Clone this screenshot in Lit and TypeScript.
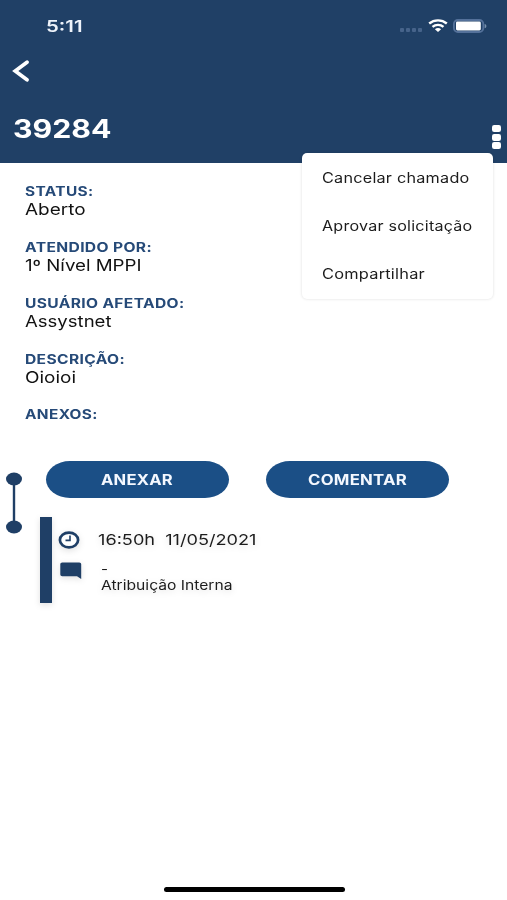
import { LitElement, html, css, svg } from "lit";
import { customElement, property, state, query } from "lit/decorators.js";
import { styleMap } from "lit/directives/style-map.js";

/** A single line of text, widened to fill the given width. */
@customElement("wide-text")
class WideText extends LitElement {
  @property({ type: Number }) width = 100;
  @property() text = "";
  @state() private ratio = 1.2;
  @query("span") private label!: HTMLSpanElement;

  static styles = css`
    :host { display: block; white-space: pre; }
    .label { display: inline-block; vertical-align: top; transform-origin: left center; }
  `;

  updated() {
    const natural = parseFloat(getComputedStyle(this.label).width);
    if (natural > 0) this.ratio = this.width / natural;
  }

  render() {
    return html`<span class="label" style=${styleMap({ transform: `scaleX(${this.ratio})` })}>${this.text}</span>`;
  }
}

interface Field { label: string; labelWidth: number; value?: string; valueWidth?: number; }

const FIELDS: Field[] = [
  { label: "STATUS:", labelWidth: 68.5, value: "Aberto", valueWidth: 60.5 },
  { label: "ATENDIDO POR:", labelWidth: 127, value: "1º Nível MPPI", valueWidth: 116.5 },
  { label: "USUÁRIO AFETADO:", labelWidth: 159.5, value: "Assystnet", valueWidth: 86.5 },
  { label: "DESCRIÇÃO:", labelWidth: 100, value: "Oioioi", valueWidth: 51 },
  { label: "ANEXOS:", labelWidth: 72.7 },
];

const ACTIONS = [
  { text: "Cancelar chamado", width: 147.5 },
  { text: "Aprovar solicitação", width: 150.5 },
  { text: "Compartilhar", width: 103 },
];

const wifi = svg`<svg width="20" height="14" viewBox="0 0 20 14">
  <g fill="none" stroke="#fff" stroke-width="2.4">
    <path d="M1.2 4.5C6.2 .3 13.8 .3 18.8 4.5"/>
    <path d="M4.5 7.9C7.6 5.2 12.4 5.2 15.5 7.9"/>
  </g>
  <path d="M6.9 10.3C8.6 8.7 11.4 8.7 13.1 10.3L10 13.1Z" fill="#fff"/>
</svg>`;

const battery = svg`<svg width="34" height="14" viewBox="0 0 34 14">
  <rect x=".9" y="1" width="29.4" height="12" rx="4" fill="none" stroke="#54719a" stroke-width="1.8"/>
  <rect x="3" y="2.6" width="24.8" height="8.9" rx="1.4" fill="#fff"/>
  <path d="M31.6 4.9C34 5.4 34 8.7 31.6 9.2Z" fill="#7891ad"/>
</svg>`;

const back = svg`<svg width="18" height="22" viewBox="0 0 18 22">
  <path d="M15 2.2L3.2 11L15 19.8" fill="none" stroke="#fff" stroke-width="3.7" stroke-linecap="round" stroke-linejoin="miter"/>
</svg>`;

const clock = svg`<svg width="22" height="18" viewBox="0 0 22 18">
  <ellipse cx="11" cy="9" rx="9.1" ry="7.4" fill="#fff" stroke="#1f3f66" stroke-width="2.7"/>
  <path d="M12 4.5V9.4H7.5" fill="none" stroke="#1f3f66" stroke-width="1.6"/>
</svg>`;

const comment = svg`<svg width="22" height="18" viewBox="0 0 22 18">
  <path d="M2.2 .4H19.3Q21.2 .4 21.2 2V17L17 14.2H2.2Q.3 14.2 .3 12.6V2Q.3 .4 2.2 .4Z" fill="#1f3f66"/>
</svg>`;

const timeline = svg`<svg width="18" height="62" viewBox="0 0 18 62">
  <path d="M9 7V55" stroke="#1f3f66" stroke-width="2.4"/>
  <ellipse cx="9" cy="7" rx="8" ry="6.5" fill="#1f3f66"/>
  <ellipse cx="9" cy="55" rx="8" ry="6.5" fill="#1f3f66"/>
</svg>`;

@customElement("app-root")
class AppRoot extends LitElement {
  static styles = css`
    :host {
      display: flex; flex-direction: column; position: relative;
      width: 507px; height: 900px; overflow: hidden; box-sizing: border-box;
      background: #fff; color: #111; font-family: Inter, "Liberation Sans", sans-serif;
    }
    * { box-sizing: border-box; }
    svg { display: block; flex: none; }
    .header { height: 163.4px; flex: none; background: #204066; color: #fff; }
    .status { display: flex; align-items: center; height: 52px; padding: 0 20.3px 0 46px; }
    .time { font-size: 16px; line-height: 20px; font-weight: 600; margin-right: auto; color: #eef3fa; }
    .signal { display: flex; gap: 2.2px; margin: 8px 5.5px 0 0; }
    .signal i { width: 4px; height: 4px; border-radius: 1px; background: #46638a; }
    .wifi { margin-right: 5px; }
    .back { display: flex; height: 38px; align-items: center; padding-left: 12px; }
    .title { display: flex; height: 77px; align-items: center; padding: 0 6.5px 0 13px; justify-content: space-between; }
    .number { font-size: 25px; line-height: 30px; font-weight: 700; }
    .more { display: flex; flex-direction: column; gap: 1.8px; padding-top: 17px; }
    .more i { width: 9px; height: 7px; border-radius: 2.2px; background: #fff; }
    .menu {
      position: absolute; z-index: 2; top: 153px; left: 302px; width: 191px; height: 145.5px;
      padding: 1px 0 0 19.5px; background: #fff; border-radius: 5px;
      box-shadow: 0 0 3px rgba(0, 0, 0, .14); color: #1c1c1c; font-size: 14px;
    }
    .menu wide-text { line-height: 48px; letter-spacing: .2px; }
    .fields { padding: 19px 0 0 25.4px; height: 297.6px; flex: none; }
    .field { height: 55.75px; }
    .name { font-size: 13px; line-height: 18px; font-weight: 700; letter-spacing: .3px; color: #264a78; }
    .value { font-size: 16px; line-height: 18.5px; }
    .progress { display: flex; flex: none; padding-left: 5.3px; }
    .line { padding-top: 11px; width: 34.7px; flex: none; }
    .column { display: flex; flex-direction: column; gap: 19.5px; }
    .buttons { display: flex; gap: 36.5px; padding-left: 5.7px; }
    .button {
      width: 183.5px; height: 37px; border-radius: 24px / 18.5px; background: #1b4f86; color: #f4f8ff;
      display: flex; justify-content: center; font-size: 14px; line-height: 37px; font-weight: 700; letter-spacing: .2px;
    }
    .anexar wide-text { width: 72px; }
    .comentar wide-text { width: 99px; }
    .entry {
      border-left: 12.5px solid #1f3f66; height: 85.5px; padding: 14px 0 0 5.5px; width: 230px;
      display: flex; flex-direction: column; filter: drop-shadow(0 2px 3px rgba(0, 0, 0, .12)); color: #1c1c1c;
    }
    .row { display: flex; }
    .when { height: 30.5px; gap: 18px; }
    .when svg { margin-left: .5px; }
    .date { font-size: 15px; line-height: 17px; }
    .what { gap: 19.5px; padding-left: 2.5px; }
    .note { font-size: 13px; line-height: 16px; margin-top: -1px; }
    .home { margin: auto auto 8px 163.5px; width: 181px; height: 5px; flex: none; border-radius: 3px; background: #000; }
  `;

  render() {
    return html`
      <header class="header">
        <div class="status">
          <wide-text class="time" .text=${"5:11"} .width=${36.5}></wide-text>
          <div class="signal"><i></i><i></i><i></i><i></i></div>
          <div class="wifi">${wifi}</div>
          ${battery}
        </div>
        <div class="back">${back}</div>
        <div class="title">
          <wide-text class="number" .text=${"39284"} .width=${98.5}></wide-text>
          <div class="more"><i></i><i></i><i></i></div>
        </div>
      </header>
      <nav class="menu">
        ${ACTIONS.map((a) => html`<wide-text .text=${a.text} .width=${a.width}></wide-text>`)}
      </nav>
      <section class="fields">
        ${FIELDS.map((f) => html`<div class="field">
          <wide-text class="name" .text=${f.label} .width=${f.labelWidth}></wide-text>
          ${f.value ? html`<wide-text class="value" .text=${f.value} .width=${f.valueWidth}></wide-text>` : ""}
        </div>`)}
      </section>
      <section class="progress">
        <div class="line">${timeline}</div>
        <div class="column">
          <div class="buttons">
            <div class="button anexar"><wide-text .text=${"ANEXAR"} .width=${72}></wide-text></div>
            <div class="button comentar"><wide-text .text=${"COMENTAR"} .width=${99}></wide-text></div>
          </div>
          <div class="entry">
            <div class="row when">${clock}
              <wide-text class="date" .text=${"16:50h  11/05/2021"} .width=${158.5}></wide-text>
            </div>
            <div class="row what">${comment}
              <div class="note">
                <wide-text .text=${"-"} .width=${7}></wide-text>
                <wide-text .text=${"Atribuição Interna"} .width=${131.5}></wide-text>
              </div>
            </div>
          </div>
        </div>
      </section>
      <div class="home"></div>
    `;
  }
}
